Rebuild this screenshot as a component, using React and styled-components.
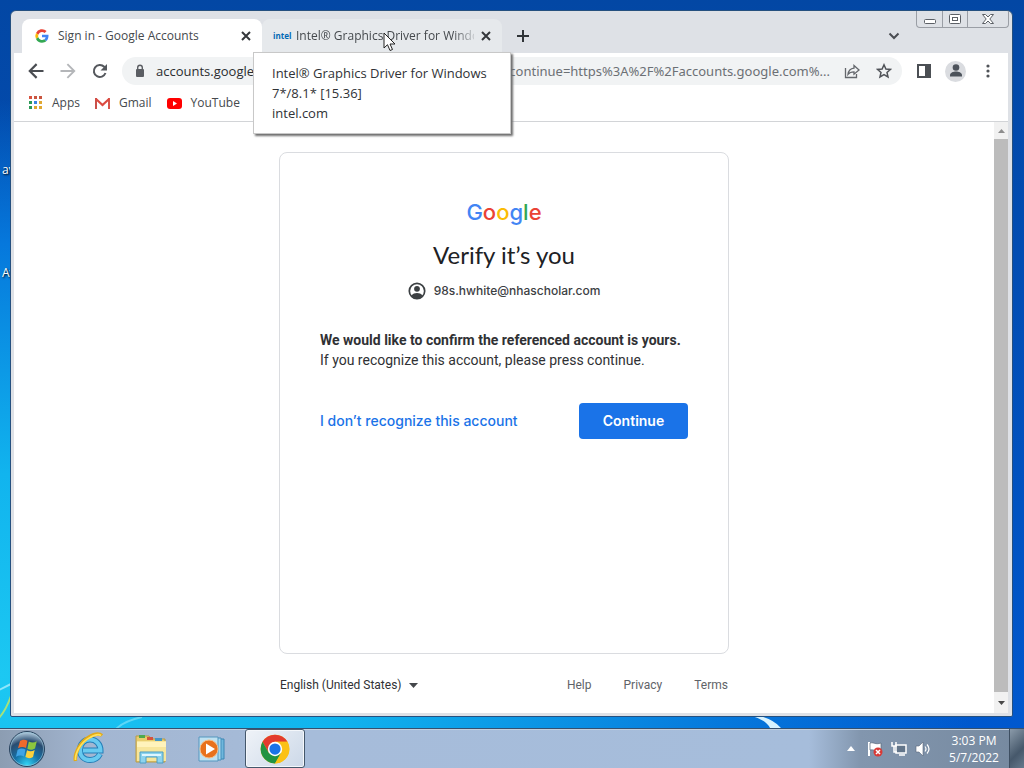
import React from "react";
import styled, { createGlobalStyle, css } from "styled-components";

const ui = '"Open Sans", "Noto Sans", sans-serif';
const product = 'Inter, "Liberation Sans", sans-serif';

const GlobalStyle = createGlobalStyle`
  * { box-sizing: border-box; }
  body { margin: 0; font-family: ${ui}; font-size: 12px; color: #3c4043; }
  button, input, select { font: inherit; color: inherit; border: 0; background: none; padding: 0; margin: 0; }
  button { display: inline-flex; align-items: center; justify-content: center; }
  a { color: inherit; text-decoration: none; }
  svg { display: block; flex: none; }
`;

const Desktop = styled.div`
  position: relative;
  display: flex;
  flex-direction: column;
  min-height: 100vh;
  overflow: hidden;
  background:
    radial-gradient(ellipse 95% 75% at 0% 88%, #1cc8f2 0%, #11b4ee 35%, #0678dc 75%, transparent 100%),
    linear-gradient(#0347a4, #0059d0);
`;

const Streaks = styled.svg`
  position: absolute;
  left: ${(p) => p.$left};
  bottom: 40px;
`;

const DesktopLabel = styled.span`
  position: absolute;
  left: 2px;
  top: ${(p) => p.$top};
  color: #fff;
  line-height: 16px;
  text-shadow: 1px 1px 2px #000;
`;

const Window = styled.main`
  position: relative;
  display: flex;
  flex-direction: column;
  flex: 1;
  margin: 10px 11px 11px 10px;
  border: 1px solid #25507f;
  border-radius: 6px 6px 2px 2px;
  background: #dee1e6;
  padding: 0 4px 3px 3px;
`;

const TabStrip = styled.header`
  display: flex;
  align-items: flex-end;
  height: 42px;
  margin-right: -2px;
  padding-left: 8px;
`;

const Tab = styled.div`
  position: relative;
  display: flex;
  align-items: center;
  width: 240px;
  height: 34px;
  padding: 0 8px 0 12px;
  gap: 8px;
  border-radius: 8px 8px 0 0;
  background: ${(p) => (p.$active ? "#fff" : "#e6e9ec")};
`;

const TabTitle = styled.span`
  flex: 1;
  min-width: 0;
  overflow: hidden;
  white-space: nowrap;
  color: #45494d;
  line-height: 16px;
  ${(p) => p.$fade && css`mask-image: linear-gradient(90deg, #000 88%, rgba(0, 0, 0, 0.2));`}
`;

const IntelMark = styled.span`
  font: 700 8px/16px ${ui};
  color: #0068b5;
  width: 16px;
  margin: 0 -1px;
`;

const IconButton = styled.button`
  width: ${(p) => p.$w || "16px"};
  height: ${(p) => p.$h || "16px"};
  flex: none;
`;

const CloseButton = styled(IconButton)`
  margin-left: -4px;
`;

const StripEnd = styled.div`
  display: flex;
  align-self: stretch;
  margin-left: auto;
  align-items: flex-start;
`;

const TabSearch = styled(IconButton)`
  margin: 17px 14px 0 0;
`;

const Caption = styled.div`
  display: flex;
  height: 17px;
  margin-right: 1px;
  border: 1px solid #9a9ea5;
  border-top: 0;
  border-radius: 0 0 4px 4px;
  button + button { border-left: 1px solid #9a9ea5; }
`;

const Tooltip = styled.div`
  position: absolute;
  z-index: 5;
  left: -9px;
  top: 33px;
  width: 258px;
  padding: 10px 18px;
  background: #fff;
  border: 1px solid #c8c8c8;
  box-shadow: 2px 2px 2px #6e6e6e;
  font-size: 13px;
  line-height: 20px;
  color: #303236;
`;

const Cursor = styled.svg`
  position: absolute;
  z-index: 6;
  left: 121px;
  top: 13px;
`;

const Toolbar = styled.nav`
  display: flex;
  align-items: center;
  height: 36px;
  padding: 0 11px 0 12px;
  gap: 12px;
  background: #fff;
`;

const Omnibox = styled.form`
  display: flex;
  align-items: center;
  flex: 1;
  height: 28px;
  min-width: 0;
  padding: 0 10px;
  border-radius: 14px;
  background: #f1f3f4;
  font-size: 13px;
`;

const Host = styled.label`
  margin-left: 8px;
  color: #2b2d30;
`;

const UrlRest = styled.input`
  flex: 1;
  min-width: 0;
  margin-right: 14px;
  height: 20px;
  text-align: right;
  && { color: #6c7075; font-family: "Noto Sans", sans-serif; }
`;

const OmniActions = styled.span`
  display: flex;
  gap: 16px;
`;

const Actions = styled.div`
  display: flex;
  align-items: center;
  gap: 13px;
  margin-left: 2px;
`;

const Avatar = styled(IconButton)`
  border-radius: 50%;
  background: #dadce0;
`;

const Bookmarks = styled.nav`
  display: flex;
  align-items: center;
  height: 33px;
  padding: 0 14px 4px;
  gap: 15px;
  background: #fff;
  border-bottom: 1px solid #d2d4d7;
`;

const Bookmark = styled.a`
  display: flex;
  align-items: center;
  gap: 8px;
  line-height: 16px;
  color: #45494d;
`;

const Viewport = styled.div`
  display: flex;
  flex: 1;
  background: #fff;
`;

const Page = styled.section`
  display: flex;
  flex-direction: column;
  align-items: center;
  flex: 1;
  padding: 30px 24px 0;
`;

const Scrollbar = styled.div`
  display: flex;
  flex-direction: column;
  width: 14px;
  background: #f1f1f1;
`;

const Thumb = styled.div`
  flex: 1;
  background: #bcbcbc;
`;

const Card = styled.article`
  display: flex;
  flex-direction: column;
  width: 100%;
  max-width: 450px;
  min-height: 502px;
  padding: 43px 40px;
  border: 1px solid #dadce0;
  border-radius: 8px;
`;

const Wordmark = styled.div`
  text-align: center;
  font: 500 22px/32px ${product};
`;

const Letter = styled.span`
  color: ${(p) => p.$c};
`;

const Title = styled.h1`
  margin: 11px 0 0;
  text-align: center;
  font: 400 24px/32px Lato, sans-serif;
  color: #202124;
`;

const Account = styled.div`
  display: flex;
  align-items: center;
  justify-content: center;
  gap: 8px;
  margin-top: 10px;
  font: 500 12px/20px ${product};
  color: #3c4043;
`;

const Message = styled.p`
  margin: 29px 0 0;
  font: 400 14px/20px Roboto, sans-serif;
  color: #303134;
  white-space: nowrap;
`;

const Choices = styled.div`
  display: flex;
  align-items: center;
  justify-content: space-between;
  margin-top: 33px;
  font: 600 14px/20px ${product};
`;

const TextAction = styled.button`
  color: #1a73e8;
  font-weight: 500;
`;

const Primary = styled.button`
  height: 36px;
  border-radius: 4px;
  background: #1a73e8;
  color: #fff;
  width: 109px;
`;

const Footer = styled.footer`
  display: flex;
  justify-content: space-between;
  align-items: center;
  width: 100%;
  max-width: 450px;
  margin-top: 20px;
  padding: 0 1px;
  font: 400 12px/22px Roboto, sans-serif;
  color: #5f6368;
`;

const Language = styled.div`
  display: flex;
  align-items: center;
  color: #303134;
  select { appearance: none; width: 129px; }
`;

const FooterLinks = styled.div`
  display: flex;
  gap: 32px;
`;

const Taskbar = styled.footer`
  position: relative;
  display: flex;
  align-items: stretch;
  height: 40px;
  border-top: 1px solid #35506f;
  background: linear-gradient(90deg, #8c9db2 0, #a3b6d1 9%, #a6bcda 30%, #a6bddb 79%, #8296ae 84%, #76899f 100%);
  box-shadow: inset 0 1px #c3d0df;
`;

const TaskButton = styled.button`
  width: ${(p) => p.$w || "60px"};
  ${(p) => p.$active && css`
    border: 1px solid #44576b;
    border-radius: 3px;
    background: linear-gradient(135deg, #eff3f8, #ccd8e8);
    box-shadow: inset 0 0 0 1px #f4f7fb;
  `}
`;

const Tray = styled.div`
  display: flex;
  align-items: center;
  gap: 8px;
  margin-left: auto;
`;

const Clock = styled.time`
  width: 70px;
  margin-right: -8px;
  text-align: center;
  color: #fff;
  line-height: 17px;
`;

const ShowDesktop = styled.button`
  align-self: stretch;
  width: 15px;
  border-left: 1px solid #3d4e61;
  background: linear-gradient(135deg, #8b9baa, #46586b 60%, #66798c);
`;

const Stroke = ({ d, size = 16, color = "#4a4d52", w = 2 }) => (
  <svg width={size} height={size} viewBox="0 0 16 16" fill="none" stroke={color} strokeWidth={w}><path d={d} /></svg>
);
const CloseIcon = () => <Stroke d="M4 4l8 8M12 4l-8 8" color="#34373b" />;

const GoogleG = () => (
  <svg width="16" height="16" viewBox="0 0 48 48">
    <path fill="#ea4335" d="M24 12c3 0 5.700 1 7.800 3l6-6A20 20 0 0 0 6 15.200l7 5.300C14.700 15.500 19 12 24 12z" />
    <path fill="#fbbc05" d="M13 27.500a11 11 0 0 1 0-7l-7-5.300a20 20 0 0 0 0 17.600z" />
    <path fill="#34a853" d="M24 44c5.400 0 10-1.800 13.300-4.900L30.500 34A12 12 0 0 1 13 27.500l-7 5.300A20 20 0 0 0 24 44z" />
    <path fill="#4285f4" d="M24 20v8h11a10 10 0 0 1-4.500 6l6.800 5.100C41.500 35 44 29 43.500 20z" />
  </svg>
);

const AppsIcon = () => {
  const colors = ["#d9533f", "#c9553f", "#c9553f", "#2c9a57", "#3b82e0", "#e0a832", "#2c9a57", "#dfa52f", "#e0a832"];
  return (
    <svg width="16" height="16" viewBox="0 0 16 16">
      {colors.map((c, i) => <rect key={i} x={1 + (i % 3) * 5} y={1 + Math.floor(i / 3) * 5} width="3" height="3" fill={c} />)}
    </svg>
  );
};

const GmailIcon = () => (
  <svg width="16" height="16" viewBox="0 0 16 16">
    <path fill="#c9504a" d="M0 3h2v11H0z" /><path fill="#d8564c" d="M13 3h2v11h-2z" />
    <path d="M1 4l6.500 6L14 4" fill="none" stroke="#dc4a40" strokeWidth="2.200" />
  </svg>
);

const YouTubeIcon = () => (
  <svg width="16" height="16" viewBox="0 0 16 16"><rect x="0" y="3" width="15" height="11" rx="3" fill="#f00" /><path d="M6 6l4 2.500L6 11z" fill="#fff" /></svg>
);

const Person = ({ size }) => (
  <svg width={size} height={size} viewBox="0 0 20 20" fill="#4d535b"><circle cx="10" cy="6.500" r="3.300" /><path d="M4 15.500v-1.300c0-2.600 3.500-3.700 6-3.700s6 1.100 6 3.700v1.300z" /></svg>
);

const AccountIcon = () => (
  <svg width="18" height="18" viewBox="0 0 18 18"><circle cx="9" cy="9" r="7.700" fill="none" stroke="#3c4043" strokeWidth="1.700" /><circle cx="9" cy="6.800" r="2.900" fill="#3c4043" /><path d="M3.500 13.500c1.500-2 3.200-2.600 5.500-2.600s4 .6 5.500 2.600C13.200 15.400 11.400 16.500 9 16.500s-4.200-1.100-5.500-3z" fill="#3c4043" /></svg>
);

const StartOrb = () => (
  <svg width="38" height="38" viewBox="0 0 38 38">
    <defs>
      <radialGradient id="orb" cx=".5" cy=".95" r=".9"><stop offset="0" stopColor="#33d5f5" /><stop offset=".4" stopColor="#1673a8" /><stop offset=".75" stopColor="#2a4c70" /><stop offset="1" stopColor="#a4bed2" /></radialGradient>
    </defs>
    <circle cx="19" cy="19" r="17.500" fill="url(#orb)" stroke="#29435e" />
    <circle cx="19" cy="19" r="16.500" fill="none" stroke="#9dc8dc" opacity=".6" />
    <path d="M12 11c3-1.800 5-1.600 7.500-.2L18 18c-2.500-1.300-5-1.300-8 .2z" fill="#ee6a2c" />
    <path d="M20.800 11.500c3 1.500 5 1.400 8-.2L27 18.500c-3 1.700-5 1.600-7.600.2z" fill="#8cc63f" />
    <path d="M9.600 19.700c3-1.700 5.200-1.500 7.900-.1L16 26.500c-2.500-1.300-5-1.300-8 .3z" fill="#3fa4e6" />
    <path d="M19 20.300c2.800 1.400 5 1.300 7.700-.2L25 27c-2.900 1.700-5 1.500-7.600.1z" fill="#fbd13d" />
  </svg>
);

const ExplorerE = () => (
  <svg width="34" height="34" viewBox="0 0 34 34" fill="none">
    <path d="M28 22c-2 4-5.500 6-10 6-6 0-10-4-10-10S12 7.500 18 7.500 28.500 12 28.500 18.500H11" stroke="#247fb8" strokeWidth="6" />
    <path d="M28 22c-2 4-5.500 6-10 6-6 0-10-4-10-10S12 7.500 18 7.500 28.500 12 28.500 18.500H11" stroke="#68caf0" strokeWidth="4" />
    <path d="M3.500 29C2 22 8 10 17 5c5-3 10-4 13-1.500" stroke="#e3aa18" strokeWidth="3.500" />
    <path d="M3.500 28C3 21 9 10 18 5.500c5-3 9-3.500 11-2" stroke="#ffe15a" strokeWidth="1.700" />
  </svg>
);

const FolderIcon = () => (
  <svg width="34" height="32" viewBox="0 0 34 32">
    <path d="M2 3h13l2 3h14v23H2z" fill="#e9cd6d" stroke="#b99b46" />
    <path d="M5 2h6v3H5z" fill="#4fa94e" /><path d="M13 4h6v3h-6z" fill="#d6533c" /><path d="M21 5h7v3h-7z" fill="#4597c8" />
    <path d="M3 8h29v20H3z" fill="#f7e69c" /><path d="M3 9h29v5H3z" fill="#fff3bb" />
    <path d="M6 30V19h23v11h-6v-6H12v6z" fill="#8dd3ed" stroke="#4c9dc4" /><path d="M8 21h19v2H8z" fill="#dff6ff" />
  </svg>
);

const MediaIcon = () => (
  <svg width="30" height="28" viewBox="0 0 30 28">
    <path d="M8 4h19v20H8z" fill="#6fb7dc" stroke="#3c86b4" /><path d="M5 3h19v22H5z" fill="#a7d9ef" stroke="#468fbb" /><path d="M2 2h19v24H2z" fill="#bfe1f1" stroke="#5597bf" />
    <circle cx="12" cy="14" r="9" fill="#e8711c" stroke="#f6bd86" /><path d="M9 8.500l9 5.500-9 5.500z" fill="#fff" />
  </svg>
);

const ChromeIcon = () => (
  <svg width="30" height="30" viewBox="0 0 48 48">
    <circle cx="24" cy="24" r="23" fill="#fbc116" />
    <path d="M4.100 12.500A23 23 0 0 1 43.900 12.500H24L14 29.800z" fill="#e33b2e" />
    <path d="M4.100 12.500A23 23 0 0 0 24 47l10-17.200L24 35.500 14 29.800z" fill="#229342" />
    <path d="M24 47l10-17.200V18.200L24 12.500h19.900A23 23 0 0 1 24 47z" fill="#fbc116" />
    <circle cx="24" cy="24" r="11.500" fill="#fff" /><circle cx="24" cy="24" r="9" fill="#1a73e8" />
  </svg>
);

const wordmark = [["G", "#4285f4"], ["o", "#ea4335"], ["o", "#fbbc05"], ["g", "#4285f4"], ["l", "#34a853"], ["e", "#ea4335"]];

export default function App() {
  return (
    <>
      <GlobalStyle />
      <Desktop>
        <Streaks $left="0" width="200" height="60" viewBox="0 0 200 60" fill="none"><path d="M-1 50Q6 42 11 28" stroke="#a5e27b" strokeWidth="2" /><path d="M-1 22q6-3 12-6" stroke="#8fe6fb" strokeWidth="2" /><path d="M116 61q8-8 26-12" stroke="#7be0f8" strokeWidth="2" opacity=".7" /></Streaks>
        <Streaks $left="73%" width="40" height="12" viewBox="0 0 40 12"><path d="M4 0q14 4 18 12h11Q26 4 12 0z" fill="#d8f3ff" /></Streaks>
        <DesktopLabel $top="162px">av</DesktopLabel>
        <DesktopLabel $top="265px">Av</DesktopLabel>
        <Window>
          <TabStrip>
            <Tab $active>
              <GoogleG />
              <TabTitle>Sign in - Google Accounts</TabTitle>
              <CloseButton aria-label="Close tab"><CloseIcon /></CloseButton>
            </Tab>
            <Tab>
              <IntelMark>intel</IntelMark>
              <TabTitle $fade>Intel® Graphics Driver for Windows</TabTitle>
              <CloseButton aria-label="Close tab"><CloseIcon /></CloseButton>
              <Tooltip role="tooltip">Intel® Graphics Driver for Windows 7*/8.1* [15.36]<br />intel.com</Tooltip>
              <Cursor width="14" height="20" viewBox="0 0 14 20"><path d="M1 1v15l3.500-3.300L7 18.500l2.500-1L7 12h5z" fill="#fff" stroke="#222" /></Cursor>
            </Tab>
            <IconButton $w="42px" $h="34px" aria-label="New tab"><Stroke d="M8 2v12M2 8h12" color="#303438" /></IconButton>
            <StripEnd>
              <TabSearch aria-label="Search tabs"><Stroke d="M3.500 5.500L8 10l4.500-4.500" /></TabSearch>
              <Caption>
                <IconButton $w="25px" aria-label="Minimize"><svg width="14" height="12"><rect x="1.500" y="6.500" width="11" height="4" rx="1" fill="#fff" stroke="#5c6066" /></svg></IconButton>
                <IconButton $w="25px" aria-label="Restore"><svg width="14" height="12"><rect x="1.500" y="1.500" width="11" height="9" rx="1" fill="#fff" stroke="#5c6066" /><rect x="4.500" y="4.500" width="5" height="3" fill="none" stroke="#5c6066" /></svg></IconButton>
                <IconButton $w="41px" aria-label="Close"><svg width="14" height="12" viewBox="0 0 14 12"><path d="M1.500 1.500h3L7 4l2.500-2.500h3L8.800 6l3.700 4.500h-3L7 8l-2.500 2.500h-3L5.200 6z" fill="#fff" stroke="#5c6066" /></svg></IconButton>
              </Caption>
            </StripEnd>
          </TabStrip>
          <Toolbar>
            <IconButton $w="20px" $h="20px" aria-label="Back"><Stroke size={20} w={1.7} d="M14 8H3M8.500 2.500L3 8l5.500 5.500" /></IconButton>
            <IconButton $w="20px" $h="20px" aria-label="Forward"><Stroke size={20} w={1.5} color="#b4b6b9" d="M2 8h11M7.500 2.500L13 8l-5.500 5.500" /></IconButton>
            <IconButton $w="20px" $h="20px" aria-label="Reload"><svg width="20" height="20" viewBox="0 0 20 20"><path d="M15.500 12a6 6 0 1 1-1.300-6.200L16 7.500" fill="none" stroke="#55585d" strokeWidth="2" /><path d="M17 3v6.500h-6.500z" fill="#55585d" /></svg></IconButton>
            <Omnibox onSubmit={(e) => e.preventDefault()}>
              <svg width="16" height="16" viewBox="0 0 16 16"><rect x="4" y="6" width="8" height="8" rx="1" fill="#5b5e63" /><path d="M5.700 6V4.500a2.300 2.300 0 0 1 4.600 0V6" fill="none" stroke="#5b5e63" strokeWidth="1.400" /></svg>
              <Host htmlFor="address">accounts.google.com</Host>
              <UrlRest id="address" readOnly value="continue=https%3A%2F%2Faccounts.google.com%..." />
              <OmniActions>
                <IconButton type="button" aria-label="Share"><svg width="16" height="16" viewBox="0 0 16 16" fill="none" stroke="#64676c" strokeWidth="1.300"><path d="M1.500 5v9.500h11V11" /><path d="M10 2.500L15 7l-5 4.200V8.800c-3 0-4.600.7-6 2.500.4-3.500 2.300-5.700 6-6.200z" /></svg></IconButton>
                <IconButton type="button" aria-label="Bookmark this page"><svg width="16" height="16" viewBox="0 0 16 16" fill="none" stroke="#505358" strokeWidth="1.500"><path d="M8 1.800l1.900 4.200 4.500.4-3.400 3 1 4.500L8 11.500l-4 2.400 1-4.500-3.400-3 4.500-.4z" /></svg></IconButton>
              </OmniActions>
            </Omnibox>
            <Actions>
              <IconButton aria-label="Side panel"><svg width="16" height="16"><rect x="2" y="2" width="12" height="12" fill="none" stroke="#4b4f54" strokeWidth="2" /><path d="M9 2h5v12H9z" fill="#4b4f54" /></svg></IconButton>
              <Avatar $w="21px" $h="21px" aria-label="Profile"><Person size={20} /></Avatar>
              <IconButton $w="18px" aria-label="Menu"><svg width="16" height="16" fill="#505358"><circle cx="8" cy="3" r="1.600" /><circle cx="8" cy="8" r="1.600" /><circle cx="8" cy="13" r="1.600" /></svg></IconButton>
            </Actions>
          </Toolbar>
          <Bookmarks>
            <Bookmark href="#apps"><AppsIcon />Apps</Bookmark>
            <Bookmark href="#gmail"><GmailIcon />Gmail</Bookmark>
            <Bookmark href="#youtube"><YouTubeIcon />YouTube</Bookmark>
            <Bookmark href="#folder" aria-label="Folder"><svg width="16" height="16"><path d="M1 3h5l2 2h7v8H1z" fill="#fbd66b" /></svg></Bookmark>
          </Bookmarks>
          <Viewport>
            <Page>
              <Card>
                <Wordmark aria-label="Google">{wordmark.map(([l, c], i) => <Letter key={i} $c={c}>{l}</Letter>)}</Wordmark>
                <Title>Verify it’s you</Title>
                <Account><AccountIcon />98s.hwhite@nhascholar.com</Account>
                <Message><strong>We would like to confirm the referenced account is yours.</strong><br />If you recognize this account, please press continue.</Message>
                <Choices>
                  <TextAction>I don’t recognize this account</TextAction>
                  <Primary>Continue</Primary>
                </Choices>
              </Card>
              <Footer>
                <Language>
                  <select aria-label="Language" defaultValue="en"><option value="en">English (United States)</option></select>
                  <svg width="9" height="5"><path d="M0 0h9L4.500 5z" fill="#44474b" /></svg>
                </Language>
                <FooterLinks><a href="#help">Help</a><a href="#privacy">Privacy</a><a href="#terms">Terms</a></FooterLinks>
              </Footer>
            </Page>
            <Scrollbar>
              <IconButton $w="14px" $h="17px" aria-label="Scroll up"><svg width="7" height="4"><path d="M0 4h7L3.500 0z" fill="#8d8d8d" /></svg></IconButton>
              <Thumb />
              <IconButton $w="14px" $h="21px" aria-label="Scroll down"><svg width="7" height="4"><path d="M0 0h7L3.500 4z" fill="#484848" /></svg></IconButton>
            </Scrollbar>
          </Viewport>
        </Window>
        <Taskbar>
          <TaskButton $w="54px" aria-label="Start"><StartOrb /></TaskButton>
          <TaskButton $w="70px" aria-label="Internet Explorer"><ExplorerE /></TaskButton>
          <TaskButton $w="54px" aria-label="Windows Explorer"><FolderIcon /></TaskButton>
          <TaskButton $w="67px" aria-label="Media Player"><MediaIcon /></TaskButton>
          <TaskButton $w="60px" $active aria-label="Google Chrome"><ChromeIcon /></TaskButton>
          <Tray>
            <IconButton aria-label="Show hidden icons"><svg width="8" height="5"><path d="M0 5h8L4 0z" fill="#fff" /></svg></IconButton>
            <IconButton aria-label="Action Center"><svg width="16" height="16" viewBox="0 0 16 16"><path d="M2 1v14" stroke="#fff" strokeWidth="2" /><path d="M3 2c4-1 5 2 11 0v7C9 11 7 8 3 9z" fill="#fff" stroke="#58677a" strokeWidth=".7" /><circle cx="11" cy="11" r="4.500" fill="#d83a36" /><path d="M9 9l4 4M13 9l-4 4" stroke="#fff" strokeWidth="1.500" /></svg></IconButton>
            <IconButton aria-label="Network"><svg width="16" height="16" fill="none" viewBox="0 0 16 16"><rect x="5" y="4" width="10" height="8" stroke="#fff" strokeWidth="1.500" fill="#62758a" /><path d="M8 14h6M1 1v4h4V1M3 5v6h3" stroke="#fff" strokeWidth="1.500" /></svg></IconButton>
            <IconButton aria-label="Volume"><svg width="16" height="16" viewBox="0 0 16 16"><path d="M1 5h3l4-4v14l-4-4H1z" fill="#fff" stroke="#58677a" strokeWidth=".6" /><path d="M10 5.500q2 2.500 0 5M12 3.500q4 4.500 0 9" fill="none" stroke="#fff" strokeWidth="1.200" /></svg></IconButton>
            <Clock>3:03 PM<br />5/7/2022</Clock>
            <ShowDesktop aria-label="Show desktop" />
          </Tray>
        </Taskbar>
      </Desktop>
    </>
  );
}
